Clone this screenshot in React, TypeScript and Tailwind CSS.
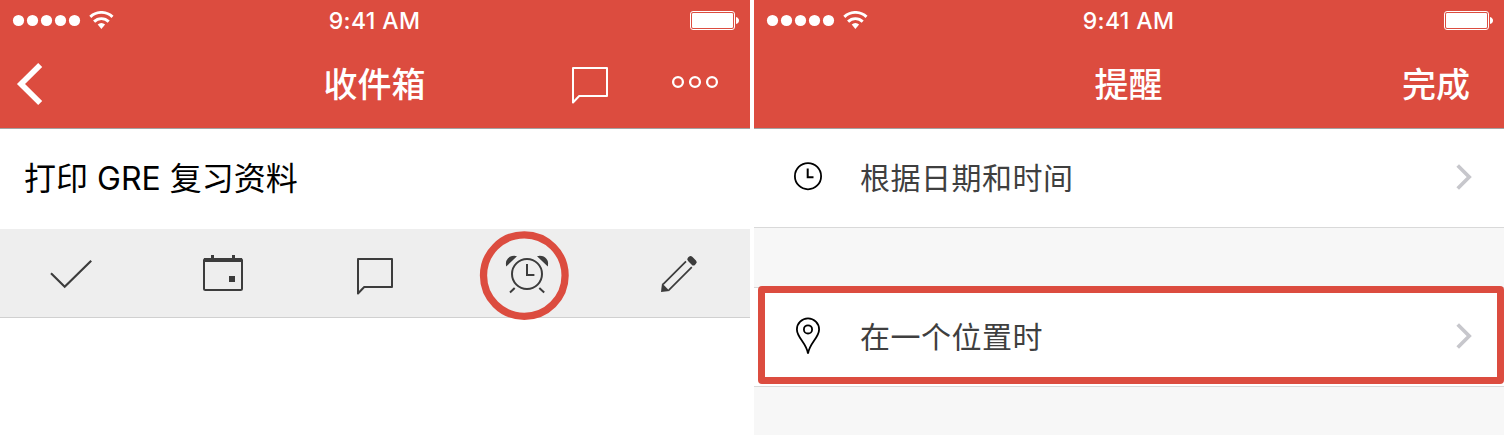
import React from "react";

const cjk = "font-['Inter','Noto_Sans_CJK_SC',sans-serif]";

function StatusBar() {
  return (
    <div className="flex h-10 items-center justify-between pl-3 pr-[11px] pt-px">
      <div className="w-32">
        <svg width="104" height="20" viewBox="0 0 104 20" fill="#fff">
          {[6.5, 20.5, 34.5, 48.5, 62.5].map((x) => (
            <circle key={x} cx={x} cy="9.500" r="5.6" />
          ))}
          <path d="M85.7 13.600a5.3 5.3 0 0 1 7.4 0L89.4 17.900z" />
          <g fill="none" stroke="#fff" strokeWidth="2.9">
            <path d="M82.1 10.600a10.4 10.4 0 0 1 14.6 0" />
            <path d="M78.3 5.900a16 16 0 0 1 22.2 0" />
          </g>
        </svg>
      </div>
      <div className="mr-[2px] font-['Inter',sans-serif] text-[23px] font-medium leading-6 tracking-[0.4px]">9:41 AM</div>
      <div className="flex w-32 justify-end">
        <svg width="49" height="20" viewBox="0 0 49 20">
          <rect x="0.5" y="0.5" width="44" height="18" rx="2.5" fill="none" stroke="#fff" />
          <rect x="2" y="2" width="41" height="15" rx="1.3" fill="#fff" />
          <path d="M46 6q3 1 3 3.500t-3 3.500z" fill="#fff" />
        </svg>
      </div>
    </div>
  );
}

function Bubble() {
  return (
    <svg width="48" height="48" viewBox="0 0 48 48" fill="none" stroke="currentColor" strokeWidth="2" strokeLinejoin="round">
      <path d="M7 43.500V9H41V37H13.200Z" />
    </svg>
  );
}

function Chevron() {
  return (
    <svg className="-mr-px mb-[2px]" width="20" height="28" viewBox="0 0 20 28" fill="none" stroke="#c7c7cc" strokeWidth="3.7">
      <path d="M2.700 2.500 14.200 14 2.700 25.500" />
    </svg>
  );
}

function InboxScreen() {
  return (
    <section className="w-[750px] bg-white">
      <header className="h-[129px] border-b border-[#a3a3a3] bg-[#dc4c3f] text-white">
        <StatusBar />
        <div className="grid h-[88px] grid-cols-3 items-center">
          <svg className="ml-4" width="28" height="44" viewBox="0 0 28 44" fill="none" stroke="#fff" strokeWidth="5.7">
            <path d="M24.200 3 5 22 24.200 41" />
          </svg>
          <h1 className="pt-[2px] pr-px text-center text-[34px] font-medium leading-[50px]">收件箱</h1>
          <div className="flex items-center pb-1 pl-[66px]">
            <div className="mt-[2px]"><Bubble /></div>
            <svg className="ml-[57px]" width="48" height="14" viewBox="0 0 48 14" fill="none" stroke="#fff" strokeWidth="2.3">
              <circle cx="7" cy="7" r="4.900" />
              <circle cx="24" cy="7" r="4.900" />
              <circle cx="41" cy="7" r="4.900" />
            </svg>
          </div>
        </div>
      </header>
      <div className="flex h-[100px] items-center pl-6 text-[32px] leading-[48px] text-black">打印 GRE 复习资料</div>
      <div className="flex h-[89px] gap-[104px] border-b border-[#d0d0d0] bg-[#eee] pl-[47px] pt-[21px] text-[#3c3c3c]">
        <svg width="48" height="48" viewBox="0 0 48 48" fill="none" stroke="currentColor" strokeWidth="2.2">
          <path d="M4 23.200 17.700 36.700 44.200 10.700" />
        </svg>
        <svg width="48" height="48" viewBox="0 0 48 48" fill="currentColor">
          <rect x="5" y="9" width="38" height="31" rx="1.500" fill="none" stroke="currentColor" strokeWidth="2" />
          <path d="M5 8h38v4H5zM12 5h3v4h-3zM33 5h3v4h-3zM30 26h6v6h-6z" />
        </svg>
        <Bubble />
        <div className="relative h-12 w-12">
          <svg width="48" height="48" viewBox="0 0 48 48" fill="none" stroke="currentColor" strokeWidth="2">
            <circle cx="24" cy="24" r="15" />
            <path d="M24 14V25H31.400M7 42.500 11.700 38M36.300 38 41.200 42.500" />
            <path d="M3.200 16.500Q2.500 12.500 3.500 10.500Q5.500 6.500 9 6Q12 5.600 14 6.200ZM44.800 16.500Q45.500 12.500 44.500 10.500Q42.500 6.500 39 6Q36 5.600 34 6.200Z" fill="currentColor" stroke="none" />
          </svg>
          <svg className="absolute -left-[24px] -top-[20px]" width="91" height="91" viewBox="0 0 91 91" fill="none">
            <circle cx="45.300" cy="45.600" r="40.800" stroke="#dc4c3f" strokeWidth="7.300" />
          </svg>
        </div>
        <svg width="48" height="48" viewBox="0 0 48 48" fill="none" stroke="currentColor" strokeWidth="1.700">
          <path d="M8 34.300 31 11.300M13.800 40.200 36.800 17.200" />
          <path d="M6 42 7 33.300 14.700 41Z" fill="currentColor" stroke="none" />
          <rect x="32" y="7.700" width="10" height="6" rx="2.400" transform="rotate(45 37 10.700)" fill="currentColor" stroke="none" />
        </svg>
      </div>
    </section>
  );
}

function Row({ icon, label }: { icon: React.ReactNode; label: string }) {
  return (
    <div className="flex h-full items-center pl-[38px] pr-[30px]">
      <div className="w-[68px] pb-[3px]">{icon}</div>
      <div className="flex-1 text-[30px] leading-[44px] tracking-[0.5px] text-[#3f3f3f]">{label}</div>
      <Chevron />
    </div>
  );
}

function ReminderScreen() {
  return (
    <section className="w-[750px] bg-[#f7f7f7]">
      <header className="h-[129px] border-b border-[#a3a3a3] bg-[#dc4c3f] text-white">
        <StatusBar />
        <div className="grid h-[88px] grid-cols-3 items-center pt-px text-[34px] font-medium leading-[50px]">
          <h1 className="col-start-2 pr-px text-center">提醒</h1>
          <div className="pr-[34px] text-right">完成</div>
        </div>
      </header>
      <div className="h-[99px] border-b border-[#d9d9d9] bg-white">
        <Row
          label="根据日期和时间"
          icon={
            <svg width="32" height="32" viewBox="0 0 32 32" fill="none" stroke="#000" strokeWidth="1.800">
              <circle cx="16" cy="15.200" r="13.100" />
              <path d="M15.700 7.500V16.200H21.500" strokeWidth="2" />
            </svg>
          }
        />
      </div>
      <div className="relative mt-[59px] h-[100px] border-y border-[#d9d9d9] bg-white">
        <Row
          label="在一个位置时"
          icon={
            <svg width="32" height="40" viewBox="0 0 32 40" fill="none" stroke="#000" strokeWidth="1.800">
              <path d="M16 37.500C14.500 27 4.900 21.500 4.900 13.400a11.100 11.100 0 0 1 22.200 0C27.100 21.500 17.500 27 16 37.500Z" />
              <circle cx="16" cy="13.400" r="4.100" />
            </svg>
          }
        />
        <div className="absolute -top-[2px] left-[4px] h-[98px] w-[746px] rounded border-[7px] border-[#dc4c3f]" />
      </div>
    </section>
  );
}

export default function App() {
  return (
    <main className={`flex h-[435px] w-[1504px] gap-1 overflow-hidden bg-white ${cjk}`}>
      <InboxScreen />
      <ReminderScreen />
    </main>
  );
}
